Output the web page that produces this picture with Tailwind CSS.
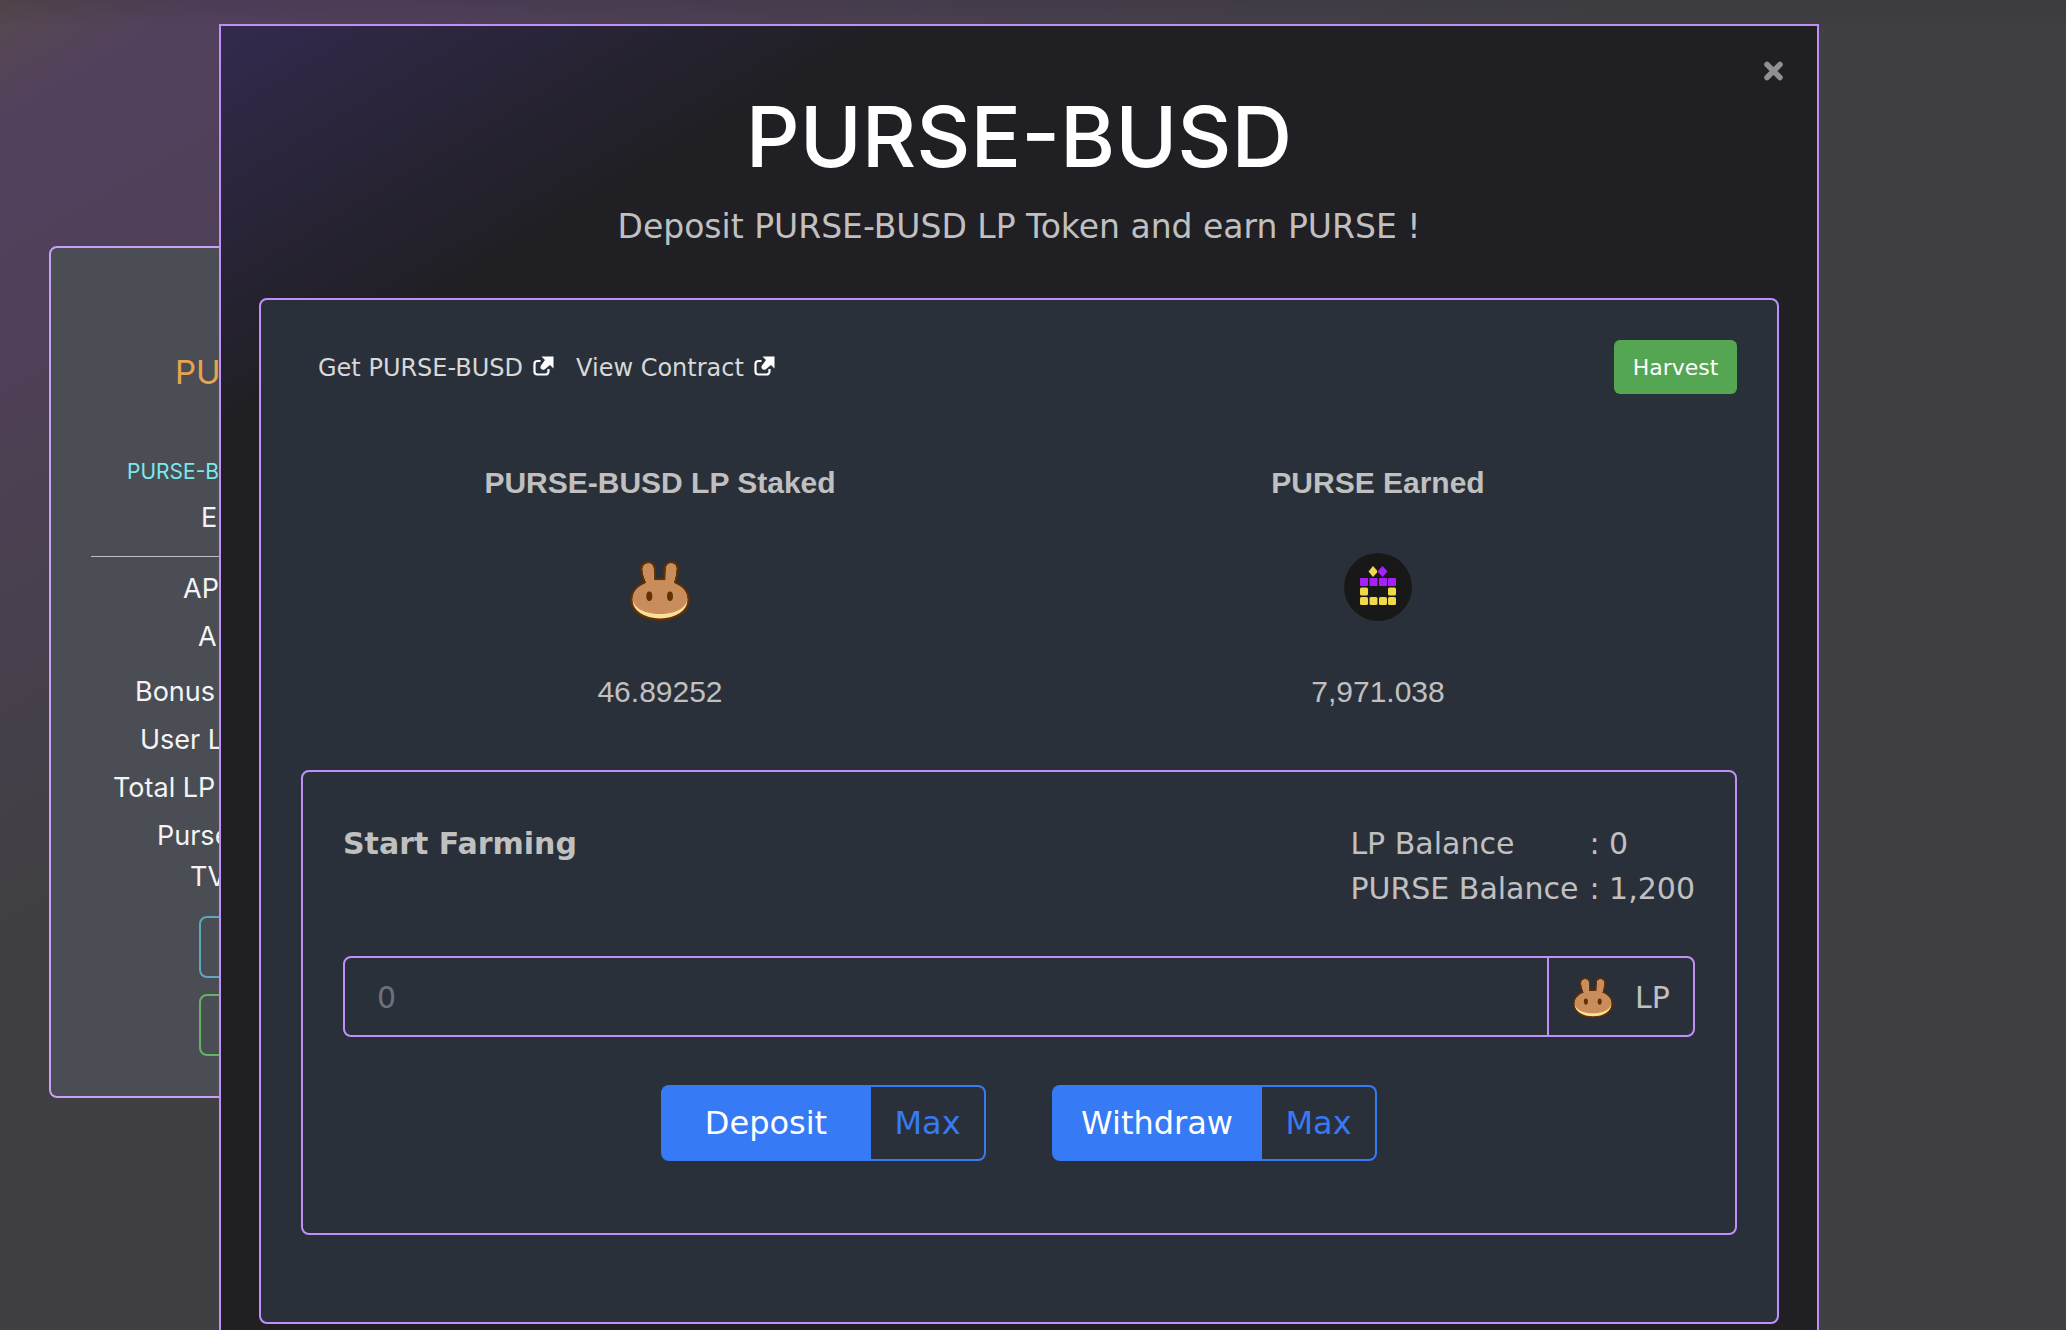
<!DOCTYPE html>
<html lang="en">
<head>
<meta charset="utf-8">
<title>PURSE-BUSD Farm</title>
<script src="https://cdn.jsdelivr.net/npm/@tailwindcss/browser@4"></script>
</head>
<body class="bg-[#403f43]">
<svg class="hidden" aria-hidden="true">
  <symbol id="bunny" viewBox="0 0 60 60">
    <path d="M15 21.500C13 17 11.500 12 11.500 8C11.500 4 14.500 1.200 18.300 1.200C22 1.200 24.500 4 24.700 8L25 18.300H34.500L34.800 8C35 4 37.500 1.200 41.200 1.200C45 1.200 47.800 4 47.500 8C47.300 12 46.500 17 45 21.500C53 25 58.600 31.500 58.600 39C58.600 50.500 46.500 58.600 30 58.600C13.500 58.600 1.400 50.500 1.400 39C1.400 31.500 7 25 15 21.500Z" fill="#fbe09a" stroke="#633001" stroke-width="2.400"/>
    <path d="M16.500 22C14.500 17 12.700 12 12.700 8C12.700 4.700 15.200 2.400 18.300 2.400C21.300 2.400 23.400 4.700 23.500 8L23.800 19.500H35.700L36 8C36.100 4.700 38.200 2.400 41.200 2.400C44.300 2.400 46.600 4.700 46.300 8C46 12 45 17 43.500 22C52 25 57.300 30.500 57.300 37.500C57.300 46.500 46 53 30 53C14 53 2.700 46.500 2.700 37.500C2.700 30.500 8 25 16.500 22Z" fill="#c98d5b"/>
    <ellipse cx="19.300" cy="35.300" rx="3" ry="4.700" fill="#633001"/>
    <ellipse cx="40" cy="35.300" rx="3" ry="4.700" fill="#633001"/>
  </symbol>
  <symbol id="external" viewBox="0 0 21 20">
    <path d="M7.500 5H4.500A3 3 0 0 0 1.500 8V15.500A3 3 0 0 0 4.500 18.500H12.500A3 3 0 0 0 15.500 15.500V13" fill="none" stroke="#fff" stroke-width="2.200"/>
    <path d="M8.500 0.500H20.500V12.500L17 9L11.500 13.500C9 14.500 6.800 12.500 7.600 10L12 4Z" fill="#fff"/>
  </symbol>
</svg>

<div class="relative h-screen overflow-hidden bg-[linear-gradient(180deg,#28283033_0px,#28283000_28px),linear-gradient(150deg,#57494f_0px,#52415e_110px,#4f4058_300px,#48404d_560px,#403f43_800px)]">
  <main class="h-full pl-[49px] pt-[246px] font-[Inter,sans-serif] text-[#f4f4f4]">
    <section class="flex w-[540px] flex-col rounded-lg border-2 border-[#c7a0f8] bg-[#4a4d54] px-10 pb-10 text-[27px] leading-12">
      <h2 class="mt-[100px] pl-[84px] text-[33px] text-[#e8a34e]">PU</h2>
      <a href="#" class="mt-[52px] pl-[36px] text-[21px] text-[#7ce8ea]">PURSE-B</a>
      <p class="-mt-[2px] pl-[110px]">E</p>
      <hr class="mt-[14px] mb-[8px] border-[#c0c0c0]">
      <p class="pl-[92px]">AP</p>
      <p class="pl-[107px]">A</p>
      <p class="mt-[7px] pl-[44px]">Bonus</p>
      <p class="pl-[49px]">User L</p>
      <p class="pl-[22px]">Total LP</p>
      <p class="pl-[66px]">Purse</p>
      <p class="-mt-[7px] pl-[99px]">TV</p>
      <button class="mt-[15px] ml-[108px] h-[62px] w-[240px] rounded-lg border-2 border-[#5fa8bb]" aria-label="Open farm"></button>
      <button class="mt-4 ml-[108px] h-[62px] w-[240px] rounded-lg border-2 border-[#67b267]" aria-label="Harvest farm"></button>
    </section>
  </main>

  <div class="absolute inset-0 overflow-hidden pt-6 pr-7">
    <div role="dialog" aria-labelledby="title" class="relative mx-auto w-full max-w-[1600px] border-2 border-[#c090f8] bg-[#201f24] bg-[linear-gradient(149deg,#332a4e_0px,#201f24_340px)] px-[38px] pt-[63px] pb-16 font-['DejaVu_Sans',sans-serif] text-[30px] leading-[45px] text-[#c0c0c0]">
      <button class="absolute top-[35px] right-[34px]" aria-label="Close">
        <svg class="h-5 w-[19px]" viewBox="0 0 19 20"><path d="M3 3.500L16 16.500M16 3.500L3 16.500" stroke="#908f93" stroke-width="5.500" stroke-linecap="round"/></svg>
      </button>
      <h1 id="title" class="text-center font-[Inter,sans-serif] text-[84px] leading-24 font-medium text-white">PURSE-BUSD</h1>
      <p class="mt-[18px] text-center text-[33px] leading-12">Deposit PURSE-BUSD LP Token and earn PURSE !</p>

      <section class="mt-[47px] rounded-lg border-2 border-[#c090f8] bg-[#2a303a] px-10 pt-10 pb-[87px]">
        <div class="flex h-[54px] items-center justify-between pl-[17px]">
          <nav class="flex gap-[22px] pt-[2px] text-[24px] text-[#d8d8d8]">
            <a href="#" class="flex items-center gap-[10px]">Get PURSE-BUSD <svg class="mb-1 h-5 w-[21px]"><use href="#external"/></svg></a>
            <a href="#" class="flex items-center gap-[10px]">View Contract <svg class="mb-1 h-5 w-[21px]"><use href="#external"/></svg></a>
          </nav>
          <button class="h-[54px] w-[123px] rounded-md bg-[#55a653] text-[22px] text-white">Harvest</button>
        </div>

        <div class="mt-[66px] grid grid-cols-2 text-center font-['Liberation_Sans',sans-serif]">
          <div>
            <h2 class="font-bold">PURSE-BUSD LP Staked</h2>
            <div class="my-12 flex h-[68px] items-end justify-center"><svg class="size-[60px]"><use href="#bunny"/></svg></div>
            <p>46.89252</p>
          </div>
          <div>
            <h2 class="font-bold">PURSE Earned</h2>
            <div class="my-12 flex justify-center">
              <svg class="size-[68px]" viewBox="0 0 68 68">
                <circle cx="34" cy="34" r="34" fill="#181818"/>
                <g fill="#f0d848">
                  <path d="M29 13L33 17.500V19.500L29 24L24.500 18.500Z"/>
                  <rect x="16" y="34.500" width="8" height="8" rx="1.500"/><rect x="44" y="34.500" width="8" height="8" rx="1.500"/>
                  <rect x="16" y="44" width="8" height="8" rx="1.500"/><rect x="25.500" y="44" width="8" height="8" rx="1.500"/><rect x="35" y="44" width="8" height="8" rx="1.500"/><rect x="44" y="44" width="8" height="8" rx="1.500"/>
                </g>
                <g fill="#a820f8">
                  <path d="M38.500 13L43.500 18.500L38.500 24L33.500 18.500Z"/>
                  <rect x="16" y="25" width="8" height="8" rx="0.800"/><rect x="25.500" y="25" width="8" height="8" rx="0.800"/><rect x="35" y="25" width="8" height="8" rx="0.800"/><rect x="44" y="25" width="8" height="8" rx="0.800"/>
                </g>
              </svg>
            </div>
            <p>7,971.038</p>
          </div>
        </div>

        <form class="mt-14 rounded-lg border-2 border-[#c090f8] px-10 pt-[49px] pb-[72px]">
          <div class="flex items-start justify-between">
            <h2 class="font-bold"><label for="amount">Start Farming</label></h2>
            <dl class="grid grid-cols-[auto_auto]">
              <dt>LP Balance</dt><dd class="pl-[11px]">: 0</dd>
              <dt>PURSE Balance</dt><dd class="pl-[11px]">: 1,200</dd>
            </dl>
          </div>
          <div class="mt-[45px] flex h-[81px] rounded-lg border-2 border-[#c090f8]">
            <input id="amount" type="text" placeholder="0" class="min-w-0 flex-1 px-8 pt-[2px] placeholder:text-[#6c727b] outline-none">
            <div class="flex w-[146px] items-center gap-[22px] border-l-2 border-[#c090f8] pt-[2px] pl-6"><svg class="size-10"><use href="#bunny"/></svg>LP</div>
          </div>
          <div class="mt-12 flex justify-center gap-[66px] text-[32px]">
            <div class="flex h-[76px]">
              <button type="button" class="w-[210px] rounded-l-lg bg-[#367af6] text-white">Deposit</button>
              <button type="button" class="w-[115px] rounded-r-lg border-2 border-l-0 border-[#367af6] text-[#367af6]">Max</button>
            </div>
            <div class="flex h-[76px]">
              <button type="button" class="w-[210px] rounded-l-lg bg-[#367af6] text-white">Withdraw</button>
              <button type="button" class="w-[115px] rounded-r-lg border-2 border-l-0 border-[#367af6] text-[#367af6]">Max</button>
            </div>
          </div>
        </form>
      </section>
    </div>
  </div>
</div>
</body>
</html>
